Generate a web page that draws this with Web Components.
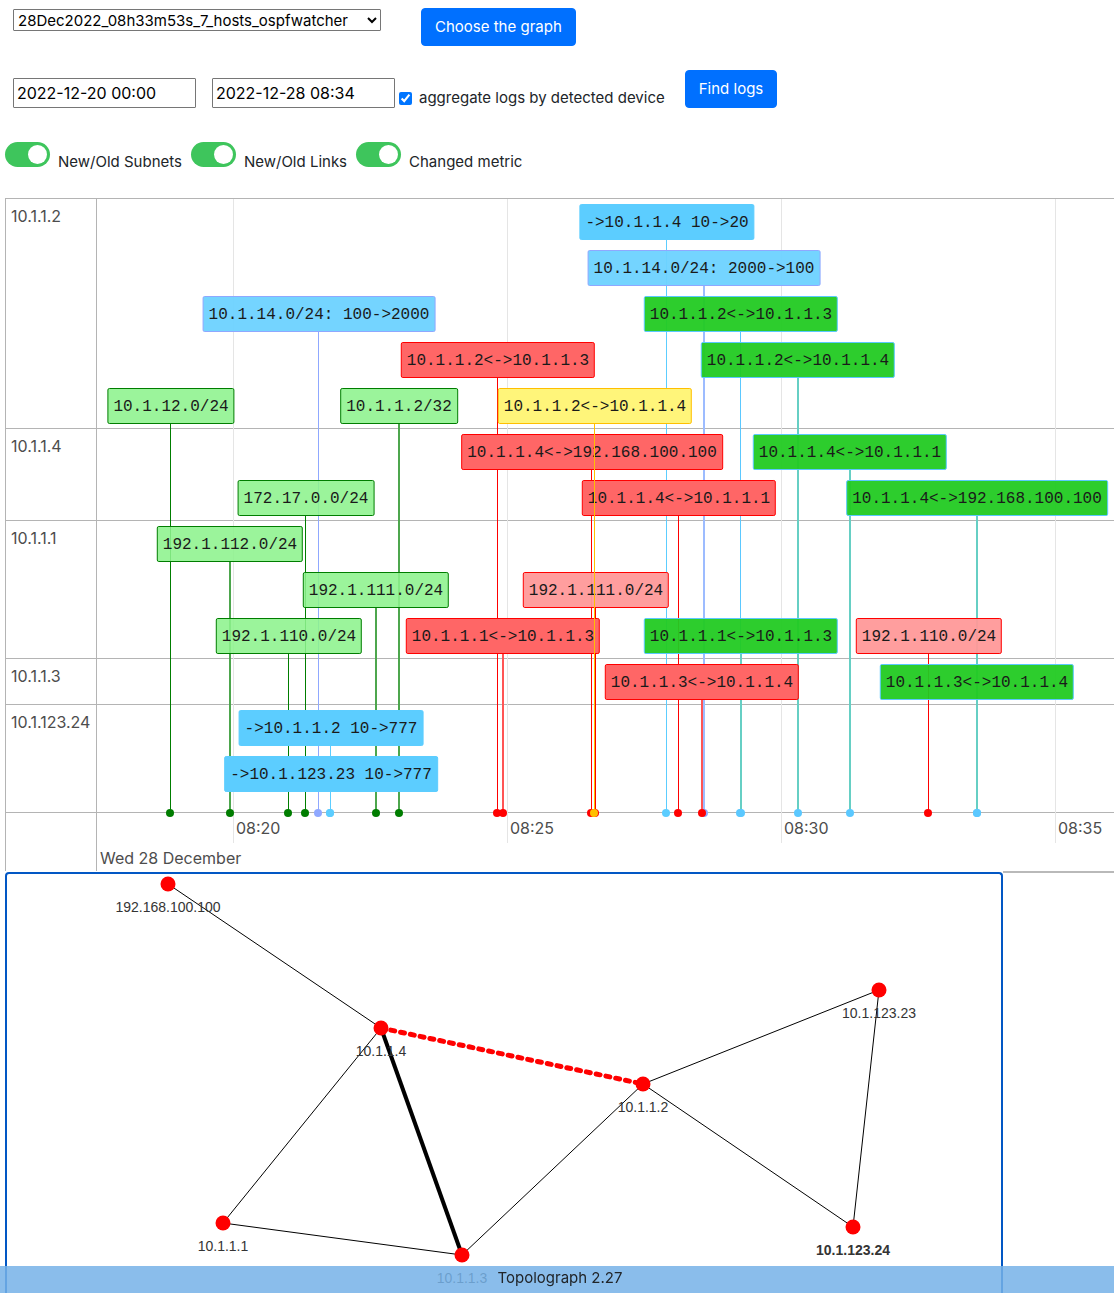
<!DOCTYPE html>
<html lang="en">
<head>
<meta charset="utf-8">
<title>Topolograph</title>
<style>
body{margin:0;height:100vh;display:flex;flex-direction:column;overflow:hidden;background:#fff;color:#212529;font:15px/24px Inter,"Liberation Sans",sans-serif}
</style>
</head>
<body>
<graph-picker></graph-picker>
<log-search></log-search>
<event-filters>
  <toggle-switch>New/Old Subnets</toggle-switch>
  <toggle-switch>New/Old Links</toggle-switch>
  <toggle-switch>Changed metric</toggle-switch>
</event-filters>
<event-timeline></event-timeline>
<network-map></network-map>
<page-footer>Topolograph 2.27</page-footer>

<script>
class Base extends HTMLElement {
  constructor(){ super(); this.attachShadow({mode:'open'}); }
  connectedCallback(){ this.shadowRoot.innerHTML = this.view(); }
}
const buttonCss = `button{font:inherit;color:#fff;background:#0070ff;border:1px solid #0070ff;border-radius:4px;padding:6px 13px;height:38px;white-space:nowrap}`;

customElements.define('graph-picker', class extends Base {
  view(){ return `<style>
    :host{display:flex;align-items:flex-start;gap:40px;padding:8px 13px 0}
    select{font:inherit;line-height:20px;width:368px;height:22px;margin-top:1px;padding:0;color:#000;background:#fff;border:1px solid #767676;border-radius:1px}
    ${buttonCss}</style>
    <select aria-label="Graph"><option>28Dec2022_08h33m53s_7_hosts_ospfwatcher</option></select>
    <button type="button">Choose the graph</button>`; }
});

customElements.define('log-search', class extends Base {
  view(){ return `<style>
    :host{display:flex;align-items:flex-end;padding:24px 13px 0}
    .date{box-sizing:border-box;font:inherit;font-size:16px;width:183px;height:30px;padding:1px 3px;border:1px solid #767676;border-radius:1px;color:#000}
    .date + .date{margin-left:16px}
    .check{display:flex;align-items:center;gap:7px;height:20px;margin-left:4px}
    .check input{width:13px;height:13px;margin:0}
    button{margin-left:20px}
    ${buttonCss}</style>
    <input class="date" type="text" aria-label="From" value="2022-12-20 00:00">
    <input class="date" type="text" aria-label="To" value="2022-12-28 08:34">
    <label class="check"><input type="checkbox" checked>aggregate logs by detected device</label>
    <button type="button">Find logs</button>`; }
});

customElements.define('event-filters', class extends Base {
  view(){ return `<style>:host{display:flex;gap:9px;padding:34px 5px 24px}</style><slot></slot>`; }
});

customElements.define('toggle-switch', class extends Base {
  view(){ return `<style>
    :host{display:block}
    label{display:flex;gap:8px;height:32px;align-items:flex-start}
    input{appearance:none;box-sizing:border-box;width:45px;height:25px;margin:0;padding:3px;border-radius:13px;background:#ccc;display:flex}
    input:checked{background:#3ec55c;justify-content:flex-end}
    input::before{content:"";width:19px;height:19px;border-radius:50%;background:#fff}
    span{margin-top:8px;white-space:nowrap}</style>
    <label><input type="checkbox" role="switch" checked><span><slot></slot></span></label>`; }
});

/* Each event: [lane within its group, x in the track, kind, text, stem style] */
const groups = [
  {name:'10.1.1.2', lanes:5, events:[
    [0,569,'metric','->10.1.1.4 10->20'],
    [1,607,'subnet','10.1.14.0/24: 2000->100','wide'],
    [2,221,'subnet','10.1.14.0/24: 100->2000'],
    [2,643,'up','10.1.1.2<->10.1.1.3'],
    [3,400,'down','10.1.1.2<->10.1.1.3'],
    [3,701,'up','10.1.1.2<->10.1.1.4','wide'],
    [4,73,'added','10.1.12.0/24'],
    [4,302,'added','10.1.1.2/32','wide'],
    [4,497,'picked','10.1.1.2<->10.1.1.4']]},
  {name:'10.1.1.4', lanes:2, events:[
    [0,494,'down','10.1.1.4<->192.168.100.100'],
    [0,753,'up','10.1.1.4<->10.1.1.1','wide'],
    [1,208,'added','172.17.0.0/24'],
    [1,581,'down','10.1.1.4<->10.1.1.1'],
    [1,880,'up','10.1.1.4<->192.168.100.100','wide']]},
  {name:'10.1.1.1', lanes:3, events:[
    [0,133,'added','192.1.112.0/24','wide'],
    [1,279,'added','192.1.111.0/24','wide'],
    [1,498,'removed','192.1.111.0/24'],
    [2,191,'added','192.1.110.0/24'],
    [2,406,'down','10.1.1.1<->10.1.1.3','wide'],
    [2,644,'up','10.1.1.1<->10.1.1.3','wide'],
    [2,831,'removed','192.1.110.0/24']]},
  {name:'10.1.1.3', lanes:1, events:[
    [0,605,'down','10.1.1.3<->10.1.1.4','wide'],
    [0,880,'up','10.1.1.3<->10.1.1.4','wide']]},
  {name:'10.1.123.24', lanes:2, events:[
    [0,233,'metric','->10.1.1.2 10->777'],
    [1,233,'metric','->10.1.123.23 10->777']]}
];
const ticks = [[136,'08:20'],[410,'08:25'],[684,'08:30'],[958,'08:35']];

customElements.define('timeline-event', class extends Base {
  view(){ return `<style>
    :host{position:absolute;z-index:1;transform:translateX(-50%);margin-left:1px;box-sizing:border-box;height:36px;padding:6px 5px 4px;border:1px solid;border-radius:2px;font:16px/24px "Liberation Mono",monospace;color:#1a1a1a;white-space:pre}
    :host([stem=wide]){margin-left:0}
    :host([kind=metric]){background:#5ccdff;border-color:#5ccdff}
    :host([kind=subnet]){background:#6dd2fff2;border-color:#8fa8ff}
    :host([kind=up]){background:#22ca22f2;border-color:#5bc8ff}
    :host([kind=down]){background:#ff6666;border-color:#ff0000}
    :host([kind=added]){background:#8df28de0;border-color:#007d00}
    :host([kind=removed]){background:#ff9999f2;border-color:#ff0000}
    :host([kind=picked]){background:#fff57a;border-color:#ffbf00;z-index:3}
    </style><slot></slot>`; }
});

customElements.define('timeline-group', class extends Base {
  view(){ return `<style>
    :host{display:flex;box-sizing:border-box;border-bottom:1px solid #b4b4b4;height:calc(var(--lanes)*46px)}
    :host(:last-of-type){height:calc(var(--lanes)*46px + 16px)}
    .name{box-sizing:border-box;width:91px;flex:none;padding:5px;border-right:1px solid #b4b4b4;color:#4d4d4d}
    .track{flex:1;position:relative}
    </style><div class="name">${this.getAttribute('name')}</div><div class="track"><slot></slot></div>`; }
});

customElements.define('event-timeline', class extends Base {
  view(){
    const esc = s => s.replace(/</g,'&lt;').replace(/>/g,'&gt;');
    let first = 0, stems = '', rows = '';
    for (const g of groups) {
      rows += `<timeline-group name="${g.name}" style="--lanes:${g.lanes}">`;
      for (const [lane,x,kind,text,stem] of g.events) {
        rows += `<timeline-event kind="${kind}" stem="${stem||'thin'}" style="left:${x}px;top:${lane*46+5}px">${esc(text)}</timeline-event>`;
        stems += `<i class="stem ${kind} ${stem||''}" style="left:${x}px;top:${(first+lane)*46+41}px"></i><i class="dot ${kind}" style="left:${x}px"></i>`;
      }
      first += g.lanes;
      rows += `</timeline-group>`;
    }
    return `<style>
    :host{display:block;flex:none;margin-left:5px;border:solid #b4b4b4;border-width:1px 0 0 1px;overflow:hidden;color:#4d4d4d;font-size:16px}
    .body{position:relative}
    .canvas{position:absolute;top:0;bottom:0;left:91px;right:0;pointer-events:none}
    .tick{position:absolute;top:0;bottom:-30px;border-left:1px solid #e5e5e5}
    .stem{position:absolute;bottom:0;width:1px;background:var(--c)}
    .dot{position:absolute;z-index:2;bottom:-4px;width:8px;height:8px;margin-left:-4px;border-radius:50%;background:var(--c)}
    .metric{--c:#5ccdff}.subnet{--c:#8fa8ff}.up{--c:#5bc8ff}.down,.removed{--c:#ff0000}.added{--c:#007d00}.picked{--c:#ffbf00}
    .stem.picked{z-index:2}
    .dot.picked{z-index:3}
    .wide{width:2px;margin-left:-1px}
    .wide.subnet{background:#9dbcff}.wide.up{background:#66cfc4}.wide.down{background:#ff5555}.wide.added{background:#4da64d}
    .axis{display:flex;height:58px}
    .corner{box-sizing:border-box;width:91px;flex:none;border-right:1px solid #b4b4b4}
    .scale{flex:1;min-width:0}
    .minor{position:relative;height:30px}
    .minor span{position:absolute;top:3px;padding-left:3px}
    .major{padding:3px;height:22px}
    </style>
    <div class="body"><div class="canvas">${ticks.map(t=>`<i class="tick" style="left:${t[0]}px"></i>`).join('')}${stems}</div>${rows}</div>
    <div class="axis"><div class="corner"></div><div class="scale">
      <div class="minor">${ticks.map(t=>`<span style="left:${t[0]}px">${t[1]}</span>`).join('')}</div>
      <div class="major">Wed 28 December</div></div></div>`;
  }
});

customElements.define('network-map', class extends Base {
  view(){
    const n = {a:[161,10,'192.168.100.100'],b:[374,154,'10.1.1.4'],c:[872,116,'10.1.123.23'],d:[636,210,'10.1.1.2'],
      e:[216,349,'10.1.1.1'],f:[455,381,'10.1.1.3'],g:[846,353,'10.1.123.24']};
    const links = [['a','b'],['b','e'],['e','f'],['f','d'],['d','c'],['d','g'],['c','g'],['b','f','main'],['b','d','lost']];
    return `<style>
    :host{display:flex;flex:1;min-height:0;margin-left:5px;border-top:2px solid #b9b9b9}
    .frame{width:90%;margin-top:-2px;padding-top:1px;background:#fff;display:flex}
    .map{flex:1;border:solid #0257c4;border-width:2px 2px 0;border-radius:4px 4px 0 0}
    svg{display:block;width:100%;height:100%}
    line{stroke:#000;stroke-width:1}
    .main{stroke-width:4}
    .lost{stroke:#f00;stroke-width:5;stroke-linecap:round;stroke-dasharray:4 6}
    circle{fill:#f00}
    text{font:14px Arial,"Liberation Sans",sans-serif;fill:#343434;text-anchor:middle}
    .bold{font-weight:bold}
    </style><div class="frame"><div class="map"><svg role="img" aria-label="Network topology">
    ${links.map(([p,q,k])=>`<line class="${k||''}" x1="${n[p][0]}" y1="${n[p][1]}" x2="${n[q][0]}" y2="${n[q][1]}"/>`).join('')}
    ${Object.entries(n).map(([k,[x,y,t]])=>`<circle cx="${x}" cy="${y}" r="7.5"/><text class="${k==='g'?'bold':''}" x="${x}" y="${y+28}">${t}</text>`).join('')}
    </svg></div></div>`;
  }
});

customElements.define('page-footer', class extends Base {
  view(){ return `<style>:host{position:fixed;z-index:5;left:0;right:0;bottom:0;height:27px;padding-left:6px;text-align:center;background:rgba(117,178,231,.85)}</style><slot></slot>`; }
});
</script>
</body>
</html>
